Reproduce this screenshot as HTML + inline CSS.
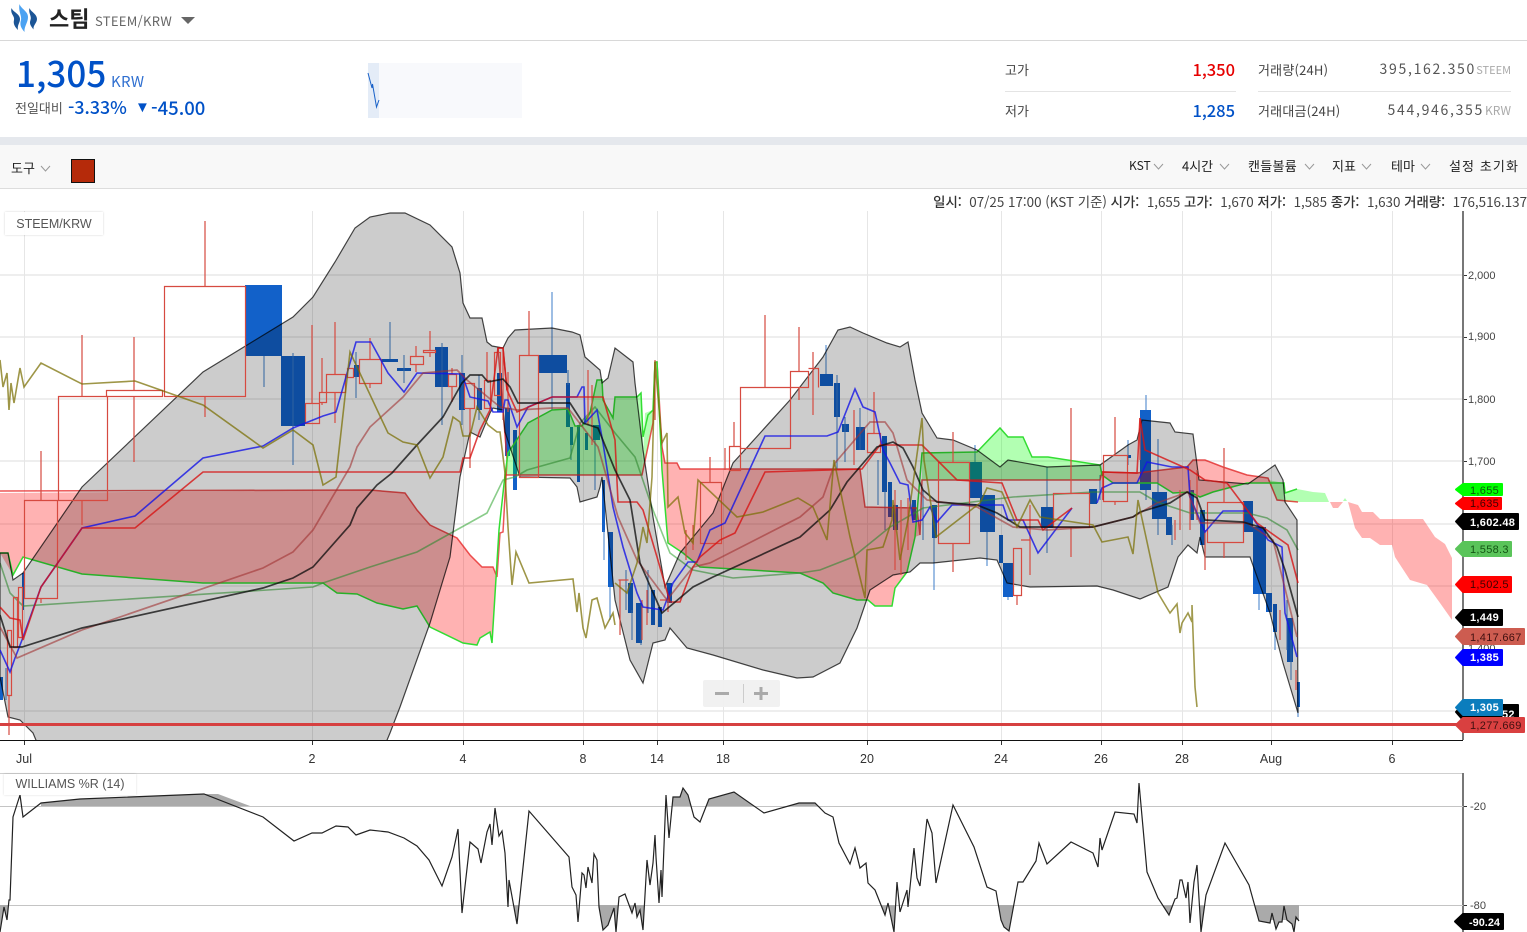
<!DOCTYPE html>
<html lang="ko"><head><meta charset="utf-8"><title>STEEM/KRW</title>
<style>
html,body{margin:0;padding:0;background:#fff;height:932px;overflow:hidden}
body{width:1527px;position:relative;font-family:"Noto Sans CJK KR","Liberation Sans",sans-serif;color:#333}
.t{position:absolute;white-space:nowrap;line-height:1}
.r{text-align:right}
.b{position:absolute}
svg{position:absolute;left:0;top:0}
.ls{font-family:"Liberation Sans","Noto Sans CJK KR",sans-serif}
.k{font-size:13px;color:#222}
</style></head><body>
<div class="b" style="left:0;top:40px;width:1527px;height:1px;background:#d8d8d8"></div>
<svg width="46" height="40" viewBox="0 0 46 40" style="z-index:2">
<path d="M11.500 8C13 12 20 14 20 19C20 23 17 25 18 30C15 27 13 24 14 20C15 16 10 14 11.500 8Z" fill="#1c5596"/>
<path d="M19.500 4C21 9 28 11 28 17C28 23 24 26 24.500 32C21 28 19.500 25 21 20C22 16 18 11 19.500 4Z" fill="#4ba2f2"/>
<path d="M29.500 8C31 12 37 14 37 19C37 23 33 25 33.500 29.500C31 26 29 24 30.500 20C32 16 28 13 29.500 8Z" fill="#1c5596"/>
</svg>
<div class="t" style="left:49px;top:7px;font-size:22px;font-weight:700;color:#222">스팀</div>
<div class="t" style="left:95px;top:14px;font-size:13px;letter-spacing:.3px;color:#666">STEEM/KRW</div>
<svg width="200" height="40" style="left:0;top:0"><path d="M181 17H195L188 24Z" fill="#666"/></svg>

<div class="t" style="left:16px;top:55px;font-size:35px;font-weight:500;color:#0051c7">1,305</div>
<div class="t" style="left:111px;top:74px;font-size:15px;letter-spacing:.3px;color:#2f6fd0">KRW</div>
<div class="t" style="left:15px;top:101px;font-size:13px;color:#555">전일대비</div>
<div class="t" style="left:68px;top:99px;font-size:17.800px;font-weight:500;color:#0051c7">-3.33%</div>
<div class="t ls" style="left:135px;top:100px;font-size:15px;color:#0051c7">▼</div>
<div class="t" style="left:151px;top:99px;font-size:18.500px;font-weight:500;color:#0051c7">-45.00</div>
<div class="b" style="left:368px;top:63px;width:154px;height:55px;background:#f8f9fc"></div>
<div class="b" style="left:368px;top:63px;width:11px;height:55px;background:#e4ecf7"></div>
<svg width="400" height="120" style="left:0;top:0"><polyline points="368,73 372,88 372.500,84 376.500,107 379,100" fill="none" stroke="#1a62c8" stroke-width="1"/></svg>

<div class="t" style="left:1005px;top:63px;font-size:13px;color:#444">고가</div>
<div class="t" style="left:1005px;top:104px;font-size:13px;color:#444">저가</div>
<div class="t r" style="right:292px;top:61px;font-size:16.500px;font-weight:500;color:#e60000">1,350</div>
<div class="t r" style="right:292px;top:102px;font-size:16.500px;font-weight:500;color:#0051c7">1,285</div>
<div class="b" style="left:1005px;top:91px;width:231px;height:1px;background:#e4e4e4"></div>
<div class="b" style="left:1258px;top:91px;width:253px;height:1px;background:#e4e4e4"></div>
<div class="t" style="left:1258px;top:63px;font-size:13px;color:#444;letter-spacing:.2px">거래량(24H)</div>
<div class="t" style="left:1258px;top:104px;font-size:13px;color:#444;letter-spacing:.2px">거래대금(24H)</div>
<div class="t r" style="right:51px;top:62px;font-size:14px;letter-spacing:1.700px;color:#555">395,162.350</div>
<div class="t r" style="right:43px;top:103px;font-size:14px;letter-spacing:1.700px;color:#555">544,946,355</div>
<div class="t r" style="right:16px;top:65px;font-size:11px;color:#aaa">STEEM</div>
<div class="t r" style="right:16px;top:105px;font-size:12px;color:#aaa">KRW</div>

<div class="b" style="left:0;top:137px;width:1527px;height:8px;background:#e5e8ed"></div>
<div class="b" style="left:0;top:145px;width:1527px;height:43px;background:#f8f8f8;border-bottom:1px solid #ddd"></div>
<div class="t k" style="left:11px;top:161px">도구</div>
<div class="b" style="left:71px;top:159px;width:22px;height:22px;background:#b52a0a;border:1px solid #111"></div>
<div class="t k" style="left:1129px;top:160px;font-size:12px">KST</div>
<div class="t k" style="left:1182px;top:159px">4시간</div>
<div class="t k" style="left:1248px;top:159px;letter-spacing:.3px">캔들볼륨</div>
<div class="t k" style="left:1332px;top:159px">지표</div>
<div class="t k" style="left:1391px;top:159px">테마</div>
<div class="t k" style="left:1449px;top:159px;letter-spacing:1.100px">설정 초기화</div>
<svg width="1527" height="190" style="left:0;top:0;z-index:2"><g fill="none" stroke="#999" stroke-width="1">
<polyline points="41,166 45.500,171 50,166"/><polyline points="1154,164 1158.500,169 1163,164"/><polyline points="1220,164 1224.500,169 1229,164"/><polyline points="1305,164 1309.500,169 1314,164"/><polyline points="1362,164 1366.500,169 1371,164"/><polyline points="1421,164 1425.500,169 1430,164"/></g></svg>

<div class="t r" style="right:0;top:195px;font-size:13.400px;color:#444"><b style="font-weight:500;color:#333">일시:</b>&nbsp; 07/25 17:00 (KST 기준) <b style="font-weight:500;color:#333">시가:</b>&nbsp; 1,655 <b style="font-weight:500;color:#333">고가:</b>&nbsp; 1,670 <b style="font-weight:500;color:#333">저가:</b>&nbsp; 1,585 <b style="font-weight:500;color:#333">종가:</b>&nbsp; 1,630 <b style="font-weight:500;color:#333">거래량:</b>&nbsp; 176,516.137</div>

<svg width="1527" height="932" viewBox="0 0 1527 932" style="top:0;left:0">
<defs>
<clipPath id="main"><rect x="0" y="211" width="1463" height="529"/></clipPath>
<clipPath id="wtop"><rect x="0" y="774" width="1463" height="32"/></clipPath>
<clipPath id="wbot"><rect x="0" y="905" width="1463" height="27"/></clipPath>
</defs>
<g fill="none">
<path stroke="#eeeeee" stroke-width="2" d="M0 275H1463M0 337H1463M0 399H1463M0 461H1463M0 524H1463M0 586H1463M0 648H1463M0 711H1463"/>
<path stroke="#e6e6e6" stroke-width="1" d="M24.500 211V740M312.500 211V740M463.500 211V740M583.500 211V740M657.500 211V740M723.500 211V740M867.500 211V740M1001.500 211V740M1101.500 211V740M1182.500 211V740M1271.500 211V740M1392.500 211V740"/>
</g>
<g clip-path="url(#main)">
<!-- blue filled candles -->
<g fill="#1261c9">
<path d="M245 285H282V356H245ZM281 356H305V426H281ZM354 365H359V377H354ZM381 359H398V362H381ZM397 368H411V371H397ZM435 347H448V387H435ZM459 373H465V410H459ZM477 388H482V410H477ZM497 373H502V412H497ZM505 408H510V456H505ZM513 430H517V490H513ZM538 355H567V373H538ZM566 383H570V427H566ZM570 427H573V445H570ZM577 425H580V482H577ZM585 433H588V450H585ZM593 425H600V440H593ZM602 480H605V532H602ZM608 532H613V587H608ZM628 583H633V613H628ZM636 603H642V643H636ZM651 590H655V625H651ZM658 607H662V627H658ZM667 583H672V603H667ZM820 374H833V386H820ZM834 383H840V417H834ZM842 424H849V432H842ZM856 427H865V450H856ZM882 436H887V492H882ZM888 482H892V517H888ZM893 505H898V530H893ZM912 500H916V520H912ZM932 505H937V538H932ZM969 462H982V498H969ZM980 495H995V532H980ZM999 535H1003V563H999ZM1003 563H1013V597H1003ZM1041 507H1053V528H1041ZM1089 489H1097V504H1089ZM1128 455H1131V458H1128ZM1140 410H1151V490H1140ZM1152 492H1167V519H1152ZM1166 517H1172V535H1166ZM1190 490H1194V520H1190ZM1200 510H1205V545H1200ZM1243 501H1253V532H1243ZM1253 527H1266V594H1253ZM1266 593H1272V612H1266ZM1273 604H1277V632H1273ZM1287 618H1293V662H1287ZM1297 682H1300V707H1297ZM0 677H3V700H0ZM22 573H24V610H22Z"/>
</g>
<g fill="none" stroke="#3d7cc9" stroke-width="1">
<path d="M264 356V387M293 353V465M356 352V398M390 322V359M404 355V383M442 343V425M462 355V425M479 375V420M552 292V355M552 373V410M568 370V385M571 445V460M595 440V490M604 530V560M610 587V620M626 570V610M632 610V640M641 630V645M648 570V613M826 345V374M837 375V470M845 417V462M860 408V450M878 460V505M885 490V530M923 490V540M934 538V590M975 445V462M987 532V566M1008 597V600M1047 467V507M1047 528V553M1100 475V500M1128 440V465M1146 395V410M1146 490V500M1158 439V492M1158 519V535M1172 525V545M1259 594V610M1275 630V650M1287 600V650M1291 640V680M1298 707V717M6 668V700"/>
</g>
<!-- ichimoku cloud -->
<g stroke="none">
<polygon fill="rgba(255,0,0,.3)" points="0,493 370,490 405,493 417,510 430,525 457,538 470,555 482,567 493,567 497,577 498,545 492,643 490,632 480,638 477,645 463,643 430,627 417,606 403,609 377,603 357,594 337,593 323,583 203,583 82,574 23,557 13,575 0,553"/>
<polygon fill="rgba(0,255,0,.3)" points="505,475 508,453 528,423 552,410 568,409 575,426 582,426 590,413 597,380 602,380 603,400 613,418 615,397 637,397 641,393 643,437 642,475"/>
<polygon fill="rgba(0,255,0,.3)" points="642,475 645,413 653,410 655,375 653,423"/>
<polygon fill="rgba(255,0,0,.3)" points="655,362 662,447 665,463 677,463 680,469 860,469 865,507 900,507 917,508 920,535 915,537 907,572 895,588 892,606 875,606 868,600 857,600 833,593 823,583 800,573 700,567 683,553 668,543 662,470 657,362"/>
<polygon fill="rgba(0,255,0,.3)" points="922,453 977,452 1000,428 1008,437 1023,437 1032,457 1048,457 1100,465 1102,475 1100,480 922,480"/>
<polygon fill="rgba(255,0,0,.3)" points="1102,472 1137,473 1187,467 1193,460 1205,460 1223,467 1247,475 1268,478 1270,483 1247,483 1213,492 1200,497 1190,492 1173,493 1157,483 1113,483 1102,475"/>
<polygon fill="rgba(0,255,0,.3)" points="1268,480 1284,483 1285,500 1277,500"/>
<polygon fill="rgba(0,255,0,.3)" points="1285,502 1285,492 1297,489 1313,492 1325,493 1329,502"/>
<polygon fill="rgba(255,0,0,.3)" points="1330,502 1343,502 1338,508 1333,508"/>
<polygon fill="rgba(0,255,0,.3)" points="1343,501 1345,498 1347,501"/>
<polygon fill="rgba(255,0,0,.3)" points="1348,502 1358,505 1362,512 1373,512 1380,519 1423,519 1435,537 1445,544 1452,558 1452,620 1440,603 1427,585 1410,580 1395,557 1392,545 1380,545 1370,538 1362,538 1355,528"/>
</g>
<!-- span lines -->
<polyline fill="none" stroke="rgba(230,30,30,.75)" stroke-width="1.500" points="0,491 370,490 405,493 417,510 430,525 457,538 470,555 482,567 493,567 497,577 500,533 503,532 507,460 498,348 503,348 507,390"/>
<polyline fill="none" stroke="rgba(225,40,40,.8)" stroke-width="1.500" points="505,475 642,475 653,423 655,362 657,362 662,447 665,463 677,463 680,469 860,469 865,507 917,508 920,535 922,480 1100,480 1102,472 1137,473 1187,467 1193,460 1205,460 1223,467 1247,475 1268,478 1277,500 1298,502"/>
<polyline fill="none" stroke="#33dd33" stroke-width="1.500" points="0,553 8,553 13,575 23,557 82,574 203,583 323,583 337,593 357,594 377,603 403,609 417,606 430,627 463,643 477,645 480,638 490,632 492,643 499,530 505,475 508,453 528,423 552,410 568,409 575,426 582,426 590,413 597,380 602,380 603,400 613,418 615,397 637,397 641,393 643,437 648,415 653,410 655,362 657,362 662,470 668,543 683,553 700,567 800,573 823,583 833,593 857,600 868,600 875,606 892,606 895,588 907,572 915,537 922,453 977,452 1000,428 1008,437 1023,437 1032,457 1048,457 1100,465 1102,475 1113,483 1157,483 1173,493 1190,492 1200,497 1213,492 1247,483 1270,483 1284,483 1285,493 1297,489"/>
<polyline fill="none" stroke="rgba(60,170,60,.6)" stroke-width="1.600" points="0,563 10,593 23,606 313,587 323,583 370,567 417,552 487,513 503,480 515,477 527,470 570,458 580,423 595,407 615,433 635,457 653,510 670,553 693,570 733,578 800,573 820,570 853,557 890,527 923,508 1013,497 1093,492 1140,492 1157,502 1190,513 1247,513 1267,518 1287,530 1298,550"/>
<!-- BB band -->
<path fill="rgba(0,0,0,.2)" stroke="rgba(0,0,0,.72)" stroke-width="1.200" d="M0 553L8 553 13 580 23 573 82 487 203 372 293 317 313 297 335 262 355 228 370 217 390 213 405 213 430 225 452 247 460 273 463 303 470 318 482 318 487 342 492 346 503 348 508 338 515 330 552 328 572 332 580 335 585 357 600 370 602 383 608 378 615 348 633 362 635 383 643 450 653 517 665 587 680 553 713 513 733 463 790 400 823 357 838 330 850 327 863 333 887 343 900 347 908 342 915 380 922 413 937 438 953 440 977 450 1000 467 1008 460 1047 467 1100 465 1128 445 1137 440 1142 420 1170 423 1175 432 1193 434 1199 480 1248 484 1275 465 1283 480 1285 502 1297 520 1298 713 1283 663 1270 613 1250 557 1205 557 1200 537 1197 553 1188 545 1178 557 1168 587 1140 599 1113 590 1097 586 1030 587 1007 583 997 560 980 558 933 563 920 563 910 572 893 575 870 590 857 628 840 663 813 677 797 678 763 670 713 655 687 648 670 628 665 640 653 643 643 683 630 660 615 600 602 477 600 487 597 497 580 502 577 487 570 478 520 477 505 432 503 410 493 408 490 413 480 437 470 432 460 477 450 557 430 623 400 707 390 733 385 745 38 745 33 733 20 720 8 717 0 677Z"/>
<!-- red hollow candles -->
<g fill="none" stroke="#d64a40" stroke-width="1.200">
<path d="M24.500 500.500H57.500V598.500H24.500ZM41 451V500M41 598V603"/>
<path d="M58.500 396.500H107.500V500.500H58.500ZM82 335V396M82 500V525"/>
<path d="M106.500 390.500H162.500V396.500H106.500ZM134 337V390M134 396V462"/>
<path d="M164.500 286.500H245.500V396.500H164.500ZM205 221V286M205 396V417"/>
<path d="M305.500 403.500H319.500V423.500H305.500ZM312 325V403"/>
<path d="M319.500 392.500H326.500V402.500H319.500ZM322 358V392M322 402V405"/>
<path d="M326.500 374.500H345.500V392.500H326.500ZM335 322V374M335 392V423"/>
<path d="M347.500 368.500H353.500V377.500H347.500ZM359.500 359.500H381.500V383.500H359.500ZM370 338V359M370 383V388"/>
<path d="M410.500 356.500H423.500V364.500H410.500ZM416 346V356M416 364V372M423.500 350.500H435.500V352.500H423.500ZM430 331V350M430 352V357"/>
<path d="M448.500 374.500H456.500V386.500H448.500ZM452 368V374M452 386V402M464.500 383.500H474.500V408.500H464.500ZM470 408V468"/>
<path d="M484.500 380.500H490.500V408.500H484.500ZM487 352V380M494.500 352.500H500.500V395.500H494.500ZM503 350V420M508 372V412"/>
<path d="M519.500 355.500H538.500V477.500H519.500ZM529 311V355"/>
<path d="M588 370V425M592 385V445M618.500 580H628.500M620 580V635M642 600V640M620 580V635M647 590V625M655 360V420"/>
<path d="M660 600H668V612M700.500 482.500H721.500V543.500H700.500ZM710 457V482M686 530V560M693 525V550"/>
<path d="M729.500 446.500H740.500V470.500H729.500ZM734 422V446M725 448V470"/>
<path d="M740.500 387.500H790.500V448.500H740.500ZM765 315V387"/>
<path d="M790.500 371.500H808.500V387.500H790.500ZM799 327V371M799 387V400M808.500 368.500H818.500V387.500M813 352V415"/>
<path d="M867.500 433.500H880.500V452.500H867.500ZM874 392V433M854 410V465M895 490V570M901 500V575M908 498V550"/>
<path d="M938.500 462.500H969.500V543.500H938.500ZM953 432V462M953 543V572"/>
<path d="M1013.500 548.500H1021.500V595.500H1013.500ZM1017 595V605M1021 540H1030V575M1030 505V555"/>
<path d="M1053.500 493.500H1089.500V527.500H1053.500ZM1071 408V493M1071 527V557"/>
<path d="M1103.500 455.500H1127.500V501.500H1103.500ZM1115 417V455M1115 501V505"/>
<path d="M1140 418V460M1175 520V540M1180 490V530M1190 480V530M1197 470V520"/>
<path d="M1207.500 502.500H1243.500V542.500H1207.500ZM1224 448V502M1224 542V558M1205 530V570"/>
<path d="M1280 610V640M1296 670V690M7.500 630.500H11.500V695.500H7.500ZM9 695V735M13.500 597.500H17.500V647.500H13.500ZM18.500 587.500H22.500V637.500H18.500Z"/>
</g>
<!-- MA lines -->
<polyline fill="none" stroke="rgba(20,20,230,.8)" stroke-width="1.600" points="0,650 10,672 15,658 22,640 41,587 82,528 135,516 203,458 263,446 293,428 323,416 336,412 356,342 371,342 388,373 404,392 417,373 462,374 470,397 488,401 492,410 493,412 503,412 505,400 508,400 517,427 528,407 552,397 577,397 582,387 584,387 585,423 597,410 603,443 613,507 623,547 637,593 643,607 663,610 673,583 688,562 697,562 710,530 725,523 765,436 827,436 838,432 855,389 863,407 875,412 883,450 890,463 900,483 908,485 913,522 922,520 930,507 937,522 952,505 1003,505 1008,520 1023,520 1038,553 1072,508"/>
<polyline fill="none" stroke="rgba(20,20,230,.8)" stroke-width="1.600" points="1097,503 1102,488 1113,483 1137,483 1147,462 1172,467 1188,467 1190,497 1205,532 1223,511 1248,511 1268,540 1282,547 1285,613 1297,657"/>
<polyline fill="none" stroke="rgba(215,20,20,.8)" stroke-width="1.600" points="0,607 10,618 20,620 23,640 41,587 82,528 135,528 203,472 460,472 463,458 470,458 480,430 490,410 498,348 503,348 507,390 517,412 552,397 603,397 615,440 618,502 637,502 643,510 657,557 670,602 680,602 693,567 700,557 720,540 735,533 765,472 862,469 880,445 898,445 922,445 937,460 957,480 1002,483 1017,520 1038,520 1043,530 1060,517 1072,508"/>
<polyline fill="none" stroke="rgba(215,20,20,.8)" stroke-width="1.600" points="1103,500 1103,472 1137,473 1140,418 1145,450 1190,470 1205,480 1227,483 1257,523 1288,545 1298,583"/>
<polyline fill="none" stroke="rgba(160,50,50,.6)" stroke-width="1.700" points="0,627 17,658 82,630 263,568 293,552 313,530 350,467 357,447 370,427 403,397 423,373 457,370 467,380 500,407 517,410 552,408 568,408 598,447 618,517 637,560 667,600 693,567 710,563 800,517 823,497 835,463 870,422 885,422 893,433 907,480 927,500 977,507 1013,527 1047,530 1093,527 1133,517 1157,503 1188,492 1200,523 1247,523 1273,540 1297,637"/>
<polyline fill="none" stroke="rgba(10,10,10,.75)" stroke-width="1.700" points="0,615 10,647 22,647 82,628 263,588 293,578 313,567 350,525 357,508 377,485 392,473 417,445 443,417 462,383 470,375 482,375 488,382 503,379 510,387 518,403 570,403 583,423 598,428 615,470 630,500 640,563 662,613 693,587 713,577 800,537 830,510 847,482 877,447 893,442 903,448 913,467 923,490 937,502 977,505 997,513 1020,527 1093,527 1133,517 1140,512 1170,503 1187,492 1197,498 1205,520 1243,522 1263,528 1277,547 1285,570 1298,617"/>
<polyline fill="none" stroke="rgba(120,110,0,.72)" stroke-width="1.600" points="0,360 3,387 7,373 9,410 11,383 14,403 20,368 24,387 41,363 82,384 135,381 203,405 263,448 293,430 313,445 323,485 336,477 350,352 388,433 403,442 417,445 430,478 443,457 453,417 460,422 463,436 470,436 477,407 488,425 497,432 500,432 505,473 508,527 512,585 516,552 529,583 573,579 577,612 579,593 583,628 586,638 592,600 597,598 605,628 613,613 615,625"/>
<polyline fill="none" stroke="rgba(120,110,0,.7)" stroke-width="1.600" points="615,583 627,593 637,563 643,527 647,543 652,477 655,362 662,443 667,433 668,507 678,497 685,533 693,543 698,480 737,517 763,512 798,498 813,507 827,540 834,460 850,537 865,598 867,550 883,547 892,520 893,500 900,560 908,520 922,418 924,460 936,537 980,503 987,488 1002,492 1017,527 1030,500 1040,517 1093,525 1102,542 1128,537 1133,554 1138,500 1158,593 1170,613 1177,604 1180,633 1182,623 1188,613 1192,622 1192,605 1195,687 1197,707"/>
</g>
<!-- horizontal support line -->
<rect x="0" y="723" width="1463" height="3" fill="#d64040"/>
<!-- axes -->
<rect x="1462" y="211" width="2" height="529" fill="#777"/>
<rect x="0" y="740" width="1463" height="1" fill="#111"/>
<g stroke="#333" stroke-width="1"><path d="M24.500 741V745M312.500 741V745M463.500 741V745M583.500 741V745M657.500 741V745M723.500 741V745M867.500 741V745M1001.500 741V745M1101.500 741V745M1182.500 741V745M1271.500 741V745M1392.500 741V745M1464 275.500H1467M1464 337.500H1467M1464 399.500H1467M1464 461.500H1467"/></g>
<g font-family="Liberation Sans,sans-serif" font-size="11" fill="#444">
<text x="1468" y="279">2,000</text><text x="1468" y="340">1,900</text><text x="1468" y="403">1,800</text><text x="1468" y="465">1,700</text><text x="1468" y="652">1,400</text>
</g>
<g font-family="Liberation Sans,sans-serif" font-size="12.500" fill="#333" text-anchor="middle">
<text x="24" y="763">Jul</text><text x="312" y="763">2</text><text x="463" y="763">4</text><text x="583" y="763">8</text><text x="657" y="763">14</text><text x="723" y="763">18</text><text x="867" y="763">20</text><text x="1001" y="763">24</text><text x="1101" y="763">26</text><text x="1182" y="763">28</text><text x="1271" y="763">Aug</text><text x="1392" y="763">6</text>
</g>
<!-- price tags -->
<path d="M1518 705V720H1463L1456 712 1463 705Z" fill="#000" stroke="#000" stroke-width="2" stroke-linejoin="round"/>
<text x="1502" y="718" fill="#fff" font-family="Liberation Sans,sans-serif" font-weight="700" font-size="11" letter-spacing=".3">52</text>
<g stroke-width="2" stroke-linejoin="round">
<path d="M1502 484V495H1463L1456 489.500 1463 484Z" fill="#00ff00" stroke="#00ff00"/>
<path d="M1501 498V509H1463L1456 503.500 1463 498Z" fill="#ff0000" stroke="#ff0000"/>
<path d="M1518 514V529H1463L1456 521.500 1463 514Z" fill="#000" stroke="#000"/>
<path d="M1511 542V556H1463L1456 549 1463 542Z" fill="#5ac45a" stroke="#5ac45a"/>
<path d="M1511 577V592H1463L1456 584.500 1463 577Z" fill="#ff0000" stroke="#ff0000"/>
<path d="M1502 610V625H1463L1456 617.500 1463 610Z" fill="#000" stroke="#000"/>
<path d="M1524 629V644H1463L1456 636.500 1463 629Z" fill="#cd5c50" stroke="#cd5c50"/>
<path d="M1502 650V665H1463L1456 657.500 1463 650Z" fill="#0000ff" stroke="#0000ff"/>
<path d="M1502 700V715H1463L1456 707.500 1463 700Z" fill="#0b7dbd" stroke="#0b7dbd"/>
<path d="M1524 718V732H1463L1456 725 1463 718Z" fill="#d94040" stroke="#d94040"/>
</g>
<g font-family="Liberation Sans,sans-serif" font-size="11" letter-spacing=".3">
<text x="1470" y="494" fill="#0a5a0a">1,655</text>
<text x="1470" y="507" fill="#400000">1,635</text>
<text x="1470" y="526" fill="#fff" font-weight="700">1,602.48</text>
<text x="1470" y="553" fill="#145514">1,558.3</text>
<text x="1470" y="588" fill="#400000">1,502.5</text>
<text x="1470" y="621" fill="#fff" font-weight="700">1,449</text>
<text x="1470" y="641" fill="#401010">1,417.667</text>
<text x="1470" y="661" fill="#fff" font-weight="700">1,385</text>
<text x="1470" y="711" fill="#fff" font-weight="700">1,305</text>
<text x="1470" y="729" fill="#401010">1,277.669</text>
</g>
<!-- zoom control -->
<rect x="703" y="680" width="77" height="27" rx="2" fill="#f0f0f0" opacity=".95"/>
<path d="M743.500 684V703" stroke="#ccc"/>
<path d="M715 693.500H729" stroke="#aaa" stroke-width="3"/>
<path d="M754 693.500H768M761 687V700" stroke="#aaa" stroke-width="3"/>
<!-- Williams panel -->
<rect x="0" y="773" width="1463" height="1" fill="#cfcfcf"/>
<rect x="1462" y="773" width="2" height="159" fill="#777"/>
<path d="M0 806.500H1463M0 905.500H1463" stroke="#c4c4c4" stroke-width="1"/>
<g fill="#aaa" stroke="none">
<polygon clip-path="url(#wtop)" points="41,803 80,799 204,794 263,817 263,900 41,900"/>
<polygon clip-path="url(#wtop)" points="666,795 669,838 673,797 680,797 683,788 688,795 694,817 694,900 666,900"/>
<polygon clip-path="url(#wtop)" points="700,822 709,799 734,792 764,813 799,803 815,803 825,813 825,900 700,900"/>
<polygon points="204,794 218,794 250,806 235,806"/>
<polygon clip-path="url(#wbot)" points="0,932 4,907 7,920 9,900 9,800 0,800"/>
<polygon clip-path="url(#wbot)" points="508,907 509,880 517,924 529,811 509,800 505,853"/>
<polygon clip-path="url(#wbot)" points="597,860 599,907 603,930 608,925 614,908 616,932 619,897 625,894 632,913 635,903 637,917 640,910 643,930 647,860 647,800 597,800"/>
<polygon clip-path="url(#wbot)" points="875,890 885,915 888,903 894,932 897,882 897,800 875,800"/>
<polygon clip-path="url(#wbot)" points="987,887 996,891 1001,920 1004,927 1009,931 1018,882 1018,800 987,800"/>
<polygon clip-path="url(#wbot)" points="1158,898 1169,915 1175,899 1177,800 1158,800"/>
<polygon clip-path="url(#wbot)" points="1197,865 1201,932 1206,895 1206,800 1197,800"/>
<polygon clip-path="url(#wbot)" points="1249,885 1259,921 1270,923 1272,913 1276,929 1279,922 1282,922 1284,906 1287,920 1292,924 1294,932 1296,917 1299,921 1299,800 1249,800"/>
<rect x="1260" y="905" width="39" height="15"/>
</g>
<polyline fill="none" stroke="#222" stroke-width="1.200" points="0,932 4,907 7,920 9,900 10,900 13,817 20,795 23,817 41,803 80,799 204,794 263,817 294,841 312,833 322,833 336,826 348,827 356,835 370,830 388,832 404,838 417,846 429,860 442,886 452,857 458,829 462,913 470,842 478,849 481,863 487,832 490,824 492,845 495,808 499,836 502,831 505,853 508,907 509,880 517,924 529,811 569,857 572,887 576,895 578,922 582,873 584,875 586,888 588,867 592,883 594,854 597,860 599,907 603,930 608,925 614,908 616,932 619,897 625,894 632,913 635,903 637,917 640,910 643,930 647,860 650,885 653,863 655,835 656,857 659,903 661,870 662,897 666,795 669,838 673,797 680,797 683,788 688,795 694,817 700,822 709,799 734,792 764,813 799,803 815,803 825,813 833,817 839,843 850,864 855,848 860,868 866,863 868,883 875,890 885,915 888,903 894,932 897,882 900,912 907,890 908,907 914,848 917,878 920,886 927,819 932,833 936,883 953,805 974,847 987,887 996,891 1001,920 1004,927 1009,931 1018,882 1023,882 1036,861 1039,843 1047,864 1071,842 1093,853 1098,867 1100,838 1102,850 1115,812 1134,814 1137,823 1139,783 1147,872 1158,898 1169,915 1175,899 1177,898 1180,880 1182,880 1186,898 1188,882 1190,923 1194,882 1197,865 1201,932 1206,895 1225,843 1249,885 1259,921 1270,923 1272,913 1276,929 1279,922 1282,922 1284,906 1287,920 1292,924 1294,932 1296,917 1299,921"/>
<path d="M1464 806.500H1467M1464 905.500H1467" stroke="#333"/>
<g font-family="Liberation Sans,sans-serif" font-size="11" fill="#444"><text x="1470" y="810" textLength="16" lengthAdjust="spacingAndGlyphs">-20</text><text x="1470" y="909" textLength="16" lengthAdjust="spacingAndGlyphs">-80</text></g>
<path d="M1503 914V929H1463L1455 921.500 1463 914Z" fill="#000" stroke="#000" stroke-width="2" stroke-linejoin="round"/>
<text x="1469" y="926" font-family="Liberation Sans,sans-serif" font-size="11" font-weight="700" fill="#fff" textLength="31" lengthAdjust="spacingAndGlyphs">-90.24</text>
</svg>
<div class="b ls" style="left:5px;top:212px;width:98px;height:23px;background:rgba(255,255,255,.92);box-shadow:0 0 2px rgba(0,0,0,.18);font-size:12.500px;line-height:24px;color:#555;text-align:center">STEEM/KRW</div>
<div class="b ls" style="left:4px;top:774px;width:132px;height:21px;background:rgba(255,255,255,.92);box-shadow:0 0 2px rgba(0,0,0,.15);font-size:12.500px;line-height:20px;color:#555;text-align:center">WILLIAMS %R (14)</div>
</body></html>
